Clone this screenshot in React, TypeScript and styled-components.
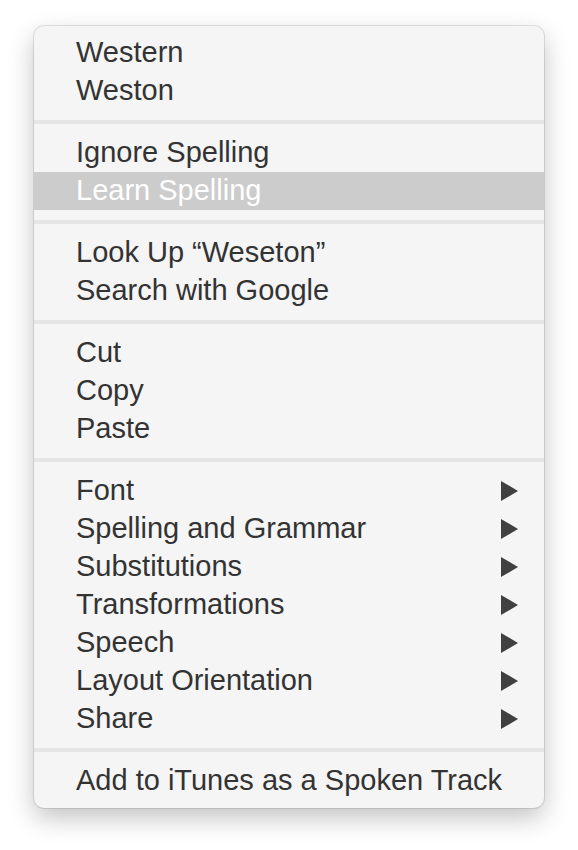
import React from 'react';
import styled, { createGlobalStyle } from 'styled-components';

const GlobalStyle = createGlobalStyle`
  html, body {
    margin: 0;
    padding: 0;
    background: #ffffff;
  }
  body {
    font-family: "Liberation Sans", Arial, sans-serif;
  }
`;

const Page = styled.div`
  padding: 26px 34px 43px 34px;
`;

const Menu = styled.div`
  width: 510px;
  padding: 8px 0;
  background: #f5f5f5;
  border-radius: 10px;
  box-shadow: 0 0 0 1px rgba(0, 0, 0, 0.1), 0 10px 26px rgba(0, 0, 0, 0.24);
  display: flex;
  flex-direction: column;
`;

const Item = styled.div<{ $active?: boolean }>`
  height: 38px;
  display: flex;
  align-items: center;
  justify-content: space-between;
  padding: 0 26px 0 42px;
  font-size: 29px;
  color: ${(p) => (p.$active ? '#ffffff' : '#333333')};
  background: ${(p) => (p.$active ? '#cccccc' : 'transparent')};
`;

const Label = styled.span`
  position: relative;
  top: -1px;
`;

const Separator = styled.div`
  height: 4px;
  margin: 10px 0;
  background: #e4e4e4;
`;

const Arrow = () => (
  <svg width="17" height="20" viewBox="0 0 17 20">
    <path d="M0 0 L17 10 L0 20 Z" fill="#404040" />
  </svg>
);

const groups: { label: string; sub?: boolean; active?: boolean }[][] = [
  [{ label: 'Western' }, { label: 'Weston' }],
  [{ label: 'Ignore Spelling' }, { label: 'Learn Spelling', active: true }],
  [{ label: 'Look Up \u201cWeseton\u201d' }, { label: 'Search with Google' }],
  [{ label: 'Cut' }, { label: 'Copy' }, { label: 'Paste' }],
  [
    { label: 'Font', sub: true },
    { label: 'Spelling and Grammar', sub: true },
    { label: 'Substitutions', sub: true },
    { label: 'Transformations', sub: true },
    { label: 'Speech', sub: true },
    { label: 'Layout Orientation', sub: true },
    { label: 'Share', sub: true },
  ],
  [{ label: 'Add to iTunes as a Spoken Track' }],
];

const App = () => {
  return (
    <Page>
      <GlobalStyle />
      <Menu>
        {groups.map((group, gi) => (
          <React.Fragment key={gi}>
            {gi > 0 && <Separator />}
            {group.map((item) => (
              <Item key={item.label} $active={item.active}>
                <Label>{item.label}</Label>
                {item.sub && <Arrow />}
              </Item>
            ))}
          </React.Fragment>
        ))}
      </Menu>
    </Page>
  );
};

export default App;
